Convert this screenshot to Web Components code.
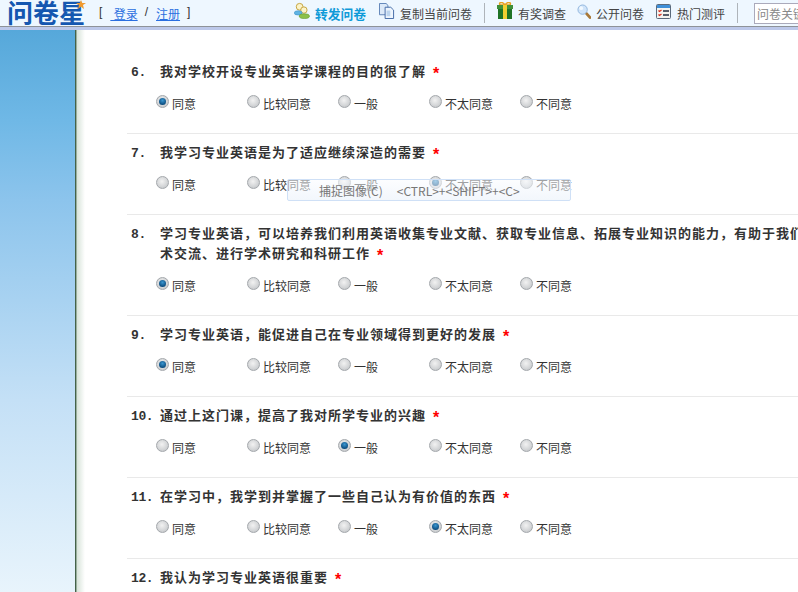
<!DOCTYPE html>
<html lang="zh">
<head>
<meta charset="utf-8">
<title>问卷星</title>
<style>
  html, body { margin: 0; padding: 0; height: 100%; overflow: hidden; background: #fff; }
  body { display: flex; flex-direction: column; font-family: "Liberation Sans", "Noto Sans CJK SC", sans-serif; font-size: 12px; color: #333; }
  .page { display: flex; flex: 1; min-height: 0; position: relative; }
</style>
</head>
<body>
<wj-header>
  <wj-nav-item icon="share" style="margin-left:0" strong>转发问卷</wj-nav-item>
  <wj-nav-item icon="copy">复制当前问卷</wj-nav-item>
  <wj-nav-sep style="margin-left:12px"></wj-nav-sep>
  <wj-nav-item icon="gift" style="margin-left:12px">有奖调查</wj-nav-item>
  <wj-nav-item icon="search" style="margin-left:11px">公开问卷</wj-nav-item>
  <wj-nav-item icon="table" style="margin-left:12px;--gap:6px">热门测评</wj-nav-item>
  <wj-nav-sep></wj-nav-sep>
</wj-header>
<div class="page">
  <wj-sidebar></wj-sidebar>
  <wj-survey>
    <wj-question num="6." selected="0">我对学校开设专业英语学课程的目的很了解</wj-question>
    <wj-question num="7." selected="3">我学习专业英语是为了适应继续深造的需要</wj-question>
    <wj-question num="8." selected="0">学习专业英语，可以培养我们利用英语收集专业文献、获取专业信息、拓展专业知识的能力，有助于我们进行学术交流、进行学术研究和科研工作</wj-question>
    <wj-question num="9." selected="0">学习专业英语，能促进自己在专业领域得到更好的发展</wj-question>
    <wj-question num="10." selected="2">通过上这门课，提高了我对所学专业的兴趣</wj-question>
    <wj-question num="11." selected="3">在学习中，我学到并掌握了一些自己认为有价值的东西</wj-question>
    <wj-question num="12.">我认为学习专业英语很重要</wj-question>
  </wj-survey>
  <wj-capture-tip></wj-capture-tip>
</div>
<script>
const ICONS = {
  share: `<svg width="16" height="18" viewBox="0 0 17 18"><circle cx="6" cy="4.5" r="3.6" fill="#fbf3c8" stroke="#c2a13c"/><circle cx="10.5" cy="8" r="3.4" fill="#fbf3c8" stroke="#c2a13c"/><ellipse cx="4.5" cy="11" rx="4.2" ry="2.3" fill="#5fb4e4" stroke="#3c8fc4" stroke-width=".6"/><ellipse cx="11" cy="14.5" rx="5.4" ry="2.5" fill="#8cc04a" stroke="#5f9a2c" stroke-width=".6"/></svg>`,
  copy: `<svg width="16" height="16" viewBox="0 0 17 17"><path d="M.5.5h7l2 2v10H.5z" fill="#dce9f8" stroke="#5a7fb4"/><path d="M6.5 4.5h6l3 3v9h-9z" fill="#eef5fd" stroke="#3f66a4"/><path d="M8 8h4v6H8z" fill="#bcd4ee"/></svg>`,
  gift: `<svg width="16" height="18" viewBox="0 0 16 18"><path d="M3 3C1 0 6-.5 8 3c2-3.500 7-3 5 0z" fill="none" stroke="#e8a020" stroke-width="1.500"/><rect y="3" width="16" height="4" fill="#3f8f3a"/><rect x="1" y="7" width="14" height="10" fill="#1f7326"/><rect x="6" y="3" width="4" height="14" fill="#f0d030"/></svg>`,
  search: `<svg width="14" height="15" viewBox="0 0 15 16"><path d="M9.500 9.500l4.500 5" stroke="#a87838" stroke-width="3" stroke-linecap="round"/><circle cx="6" cy="6" r="5" fill="#cfe4fa" stroke="#8fb4dc"/><circle cx="4.500" cy="4.500" r="2" fill="#f2f9ff"/></svg>`,
  table: `<svg width="15" height="15" viewBox="0 0 15 15"><rect x=".5" y=".5" width="14" height="14" rx="1" fill="#f4f4f0" stroke="#5a6a7c"/><rect x="1" y="1" width="13" height="3" fill="#3f8fd8"/><path d="M2.500 6.500l1 1 2-1.500M2.500 10.500l1 1 2-1.500" fill="none" stroke="#d83020" stroke-width="1.200"/><path d="M7 7h6M7 11h6" stroke="#58606c" stroke-width="2"/></svg>`
};

class WjHeader extends HTMLElement {
  constructor() {
    super();
    this.attachShadow({ mode: 'open' });
    this.shadowRoot.innerHTML = `
      <style>
        :host { display: block; flex: none; height: 30px; box-sizing: border-box; background: #eef7ff; border-bottom: 3px solid #bcc8ea; position: relative; overflow: hidden; }
        .bar { display: flex; align-items: center; height: 27px; box-sizing: border-box; border-bottom: 1px solid #8e9399; white-space: nowrap; }
        .logo { width: 98px; padding-left: 7px; box-sizing: border-box; flex: none; position: relative; font: bold 26px/24px "Noto Sans CJK SC", sans-serif; color: #1557b0; height: 26px; }
        .logo svg { position: absolute; left: 76px; top: 0; }
        .login { flex: none; width: 196px; display: flex; color: #333; font-size: 12px; }
        .login a { color: #2a6fe0; text-decoration: underline; }
        .nav { display: flex; align-items: center; }
        input { margin-left: 16px; width: 70px; height: 21px; box-sizing: border-box; border: 1px solid #aab; padding: 0 2px; font: 12px "Noto Sans CJK SC", sans-serif; flex: none; background: #fff; }
        input::placeholder { color: #888; opacity: 1; }
      </style>
      <div class="bar">
        <div class="logo">问卷星<svg width="10" height="9" viewBox="0 0 10 9"><path d="M5 0l1.300 3H10L7 5l1 4-3-2.200L2 9l1-4-3-2h3.700z" fill="#f09a30"/></svg></div>
        <div class="login"><span style="margin-left:1px">[</span><a href="#" style="margin-left:8px">&nbsp;登录</a><span style="margin:0 8px 0 7px">/</span><a href="#">注册</a><span style="margin-left:7px">]</span></div>
        <div class="nav"><slot></slot></div>
        <input placeholder="问卷关键">
      </div>`;
  }
}

class WjNavItem extends HTMLElement {
  constructor() {
    super();
    this.attachShadow({ mode: 'open' });
  }
  connectedCallback() {
    const strong = this.hasAttribute('strong');
    this.shadowRoot.innerHTML = `
      <style>
        :host { display: inline-flex; align-items: center; margin-left: 13px; height: 26px; gap: var(--gap, 5px); font-size: 12px; color: #444; flex: none; }
        .t { ${strong ? 'font-weight: bold; color: #0f9ad8; font-size: 12.750px;' : ''} }
        .i { display: flex; margin-top: -4px; }
      </style>
      <span class="i">${ICONS[this.getAttribute('icon')]}</span><span class="t"><slot></slot></span>`;
  }
}

class WjNavSep extends HTMLElement {
  constructor() {
    super();
    this.attachShadow({ mode: 'open' }).innerHTML = `
      <style>:host { display: block; width: 1px; height: 20px; background: #aeb4ba; margin: 0 0 0 12px; flex: none; }</style>`;
  }
}

class WjSidebar extends HTMLElement {
  constructor() {
    super();
    this.attachShadow({ mode: 'open' }).innerHTML = `
      <style>
        :host { display: block; flex: none; width: 85px; position: relative;
          background: linear-gradient(90deg, transparent 0 75px, #2c4a32 75px, #5c7a60 76px, #d8e4da 77px, #fff 85px),
                      linear-gradient(180deg, #56a8da 0, #6fb8e6 90px, #8cc4ec 170px, #c4e0f6 370px, #e8f4fc 562px); }
      </style>`;
  }
}

class WjSurvey extends HTMLElement {
  constructor() {
    super();
    this.attachShadow({ mode: 'open' }).innerHTML = `
      <style>:host { display: block; flex: 1; min-width: 0; padding: 23px 0 0 42px; overflow: hidden; }</style><slot></slot>`;
  }
}

const CHOICES = ['同意', '比较同意', '一般', '不太同意', '不同意'];

class WjQuestion extends HTMLElement {
  constructor() {
    super();
    this.attachShadow({ mode: 'open' });
  }
  connectedCallback() {
    const sel = this.getAttribute('selected');
    const opts = CHOICES.map((c, i) => `<wj-option ${String(i) === sel ? 'checked' : ''}>${c}</wj-option>`).join('');
    this.shadowRoot.innerHTML = `
      <style>
        :host { display: block; width: 725px; border-bottom: 1px solid #e9e9e9; padding: 8px 0 19px; }
        .title { display: flex; align-items: baseline; font: bold 13px/20px "Noto Sans CJK SC", sans-serif; letter-spacing: 1px; color: #333; padding-left: 4px; }
        .num { flex: none; width: 29px; font: bold 13px/1px "Liberation Mono", monospace; letter-spacing: -.4px; }
        .text { width: 692px; }
        .star { color: #f00; font: bold 16px/1px "Liberation Sans", sans-serif; margin-left: 7px; vertical-align: -3px; }
        .opts { display: flex; margin: 12px 0 0 29px; height: 21px; }
      </style>
      <div class="title"><span class="num">${this.getAttribute('num')}</span><span class="text"><slot></slot><span class="star">*</span></span></div>
      <div class="opts">${opts}</div>`;
  }
}

class WjOption extends HTMLElement {
  constructor() {
    super();
    this.attachShadow({ mode: 'open' });
  }
  connectedCallback() {
    const on = this.hasAttribute('checked');
    this.shadowRoot.innerHTML = `
      <style>
        :host { display: flex; width: 91px; flex: none; font: 12px/21px "Noto Sans CJK SC", sans-serif; color: #333; position: relative; }
        .r { width: 13px; height: 13px; box-sizing: border-box; border-radius: 50%; margin: 2px 3px 0 0; border: 1px solid #a4a8ac;
          background: radial-gradient(circle at 45% 40%, #f2f2f2 0, #d2d4d6 60%, #b8bbbe 100%); display: flex; align-items: center; justify-content: center; }
        .r i { width: 7px; height: 7px; border-radius: 50%; background: radial-gradient(circle at 50% 35%, #3a96d0, #0a4a7c 75%); display: block; }
      </style>
      <span class="r">${on ? '<i></i>' : ''}</span><span><slot></slot></span>`;
  }
}

class WjCaptureTip extends HTMLElement {
  constructor() {
    super();
    this.attachShadow({ mode: 'open' }).innerHTML = `
      <style>
        :host { position: absolute; left: 287px; top: 149px; width: 284px; height: 22px; box-sizing: border-box; display: flex; align-items: center;
          border: 1px solid #cfe0f6; border-radius: 2px; background: linear-gradient(180deg, rgba(250,252,255,.55), rgba(232,240,250,.55));
          font: 12px "Noto Sans CJK SC", sans-serif; color: #777; white-space: pre; padding-left: 31px; }
        span { margin-left: 14px; }
      </style>捕捉图像(C)<span>&lt;CTRL&gt;+&lt;SHIFT&gt;+&lt;C&gt;</span>`;
  }
}

customElements.define('wj-header', WjHeader);
customElements.define('wj-nav-item', WjNavItem);
customElements.define('wj-nav-sep', WjNavSep);
customElements.define('wj-sidebar', WjSidebar);
customElements.define('wj-survey', WjSurvey);
customElements.define('wj-question', WjQuestion);
customElements.define('wj-option', WjOption);
customElements.define('wj-capture-tip', WjCaptureTip);
</script>
</body>
</html>
